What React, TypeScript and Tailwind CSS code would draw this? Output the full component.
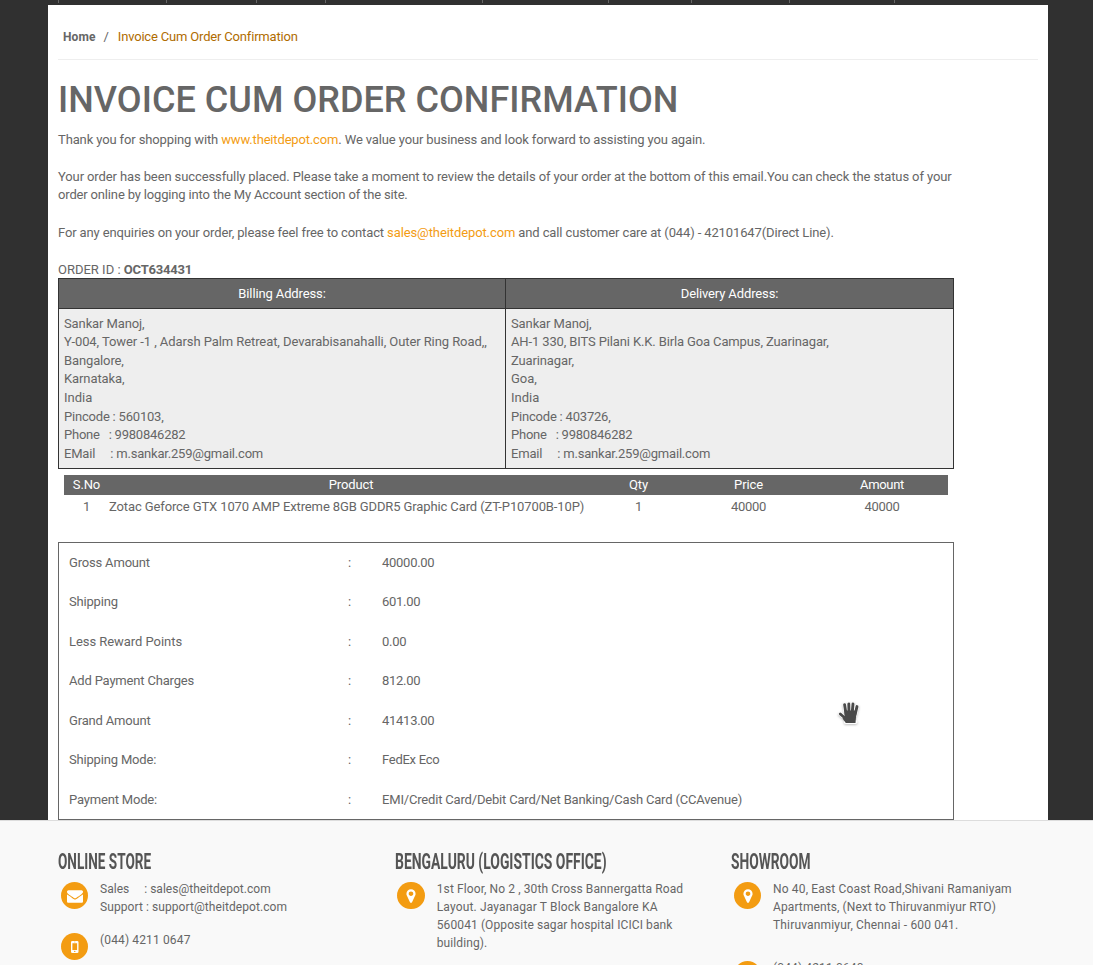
import type { ReactNode } from "react";

const ticks = [58, 166, 256, 325, 482, 608, 691, 789, 894];

const summary = [
  ["Gross Amount", "40000.00"],
  ["Shipping", "601.00"],
  ["Less Reward Points", "0.00"],
  ["Add Payment Charges", "812.00"],
  ["Grand Amount", "41413.00"],
  ["Shipping Mode:", "FedEx Eco"],
  ["Payment Mode:", "EMI/Credit Card/Debit Card/Net Banking/Cash Card (CCAvenue)"],
];

type Line = { text: string; tracking: string };

const billing: Line[] = [
  { text: "Sankar Manoj,", tracking: "tracking-[-0.11px]" },
  { text: "Y-004, Tower -1 , Adarsh Palm Retreat, Devarabisanahalli, Outer Ring Road,,", tracking: "tracking-[-0.08px]" },
  { text: "Bangalore,", tracking: "tracking-[-0.13px]" },
  { text: "Karnataka,", tracking: "tracking-[-0.1px]" },
  { text: "India", tracking: "tracking-normal" },
  { text: "Pincode : 560103,", tracking: "tracking-[-0.2px]" },
  { text: "Phone \u00a0 : 9980846282", tracking: "tracking-[-0.23px]" },
  { text: "EMail \u00a0\u00a0\u00a0 : m.sankar.259@gmail.com", tracking: "tracking-[-0.2px]" },
];

const delivery: Line[] = [
  { text: "Sankar Manoj,", tracking: "tracking-[-0.11px]" },
  { text: "AH-1 330, BITS Pilani K.K. Birla Goa Campus, Zuarinagar,", tracking: "tracking-[-0.13px]" },
  { text: "Zuarinagar,", tracking: "tracking-[-0.13px]" },
  { text: "Goa,", tracking: "tracking-normal" },
  { text: "India", tracking: "tracking-normal" },
  { text: "Pincode : 403726,", tracking: "tracking-[-0.2px]" },
  { text: "Phone \u00a0 : 9980846282", tracking: "tracking-[-0.23px]" },
  { text: "Email \u00a0\u00a0\u00a0 : m.sankar.259@gmail.com", tracking: "tracking-[-0.2px]" },
];

function Address({ title, lines, className }: { title: string; lines: Line[]; className: string }) {
  return (
    <div className={className}>
      <div className="h-[30px] border-b border-[#333] bg-[#666] text-center leading-[29px] text-white">{title}</div>
      <div className="h-[159px] bg-[#eee] px-[5px] pt-[5.750px]">
        {lines.map((l, i) => (
          <div key={i} className={"whitespace-nowrap " + l.tracking}>{l.text}</div>
        ))}
      </div>
    </div>
  );
}

function Circle({ children }: { children: ReactNode }) {
  return (
    <span className="ml-[2.75px] mt-[1.5px] flex size-[27.5px] shrink-0 items-center justify-center rounded-full bg-[#f39c12] text-white">
      {children}
    </span>
  );
}

function Envelope() {
  return (
    <svg className="mt-px" width="16" height="16" viewBox="0 0 1792 1792" fill="currentColor">
      <path d="M1792 710v794q0 66-47 113t-113 47h-1472q-66 0-113-47t-47-113v-794q44 49 101 87 362 246 497 345 57 42 92.500 65.500t94.500 48 110 24.500h2q51 0 110-24.500t94.500-48 92.500-65.500q170-123 498-345 57-39 100-87zm0-294q0 79-49 151t-122 123q-376 261-468 325-10 7-42.500 31t-54 38.500-52 32.500-57.500 27-50 9h-2q-23 0-50-9t-57.500-27-52-32.500-54-38.500-42.500-31q-91-64-262-182.500t-205-142.500q-62-42-117-115.500t-55-136.500q0-78 41.500-130t118.500-52h1472q65 0 112.500 47t47.500 113z" />
    </svg>
  );
}

function Marker() {
  return (
    <svg className="mt-px" width="16" height="16" viewBox="0 0 1792 1792" fill="currentColor">
      <path d="M1152 640q0-106-75-181t-181-75-181 75-75 181 75 181 181 75 181-75 75-181zm256 0q0 109-33 179l-364 774q-16 33-47.500 52t-67.500 19-67.500-19-46.500-52l-365-774q-33-70-33-179 0-212 150-362t362-150 362 150 150 362z" />
    </svg>
  );
}

function Mobile() {
  return (
    <svg className="mt-[2px]" width="8" height="12" viewBox="0 0 8 12">
      <path fill="currentColor" fillRule="evenodd" d="M1.300 0H6.200Q7.500 0 7.500 1.300V10.700Q7.500 12 6.200 12H1.300Q0 12 0 10.700V1.300Q0 0 1.300 0ZM1.400 2.200V9H6.100V2.200ZM3 0.800V1.300H4.500V0.800ZM3.750 9.700A.7.7 0 1 0 3.760 11.100A.7.7 0 1 0 3.750 9.700Z" />
    </svg>
  );
}

function FooterTitle({ children, className }: { children: string; className: string }) {
  return (
    <h4 className={"h-[22px] origin-left whitespace-nowrap text-[21.5px] font-bold leading-[23px] text-[#555] " + className}>
      {children}
    </h4>
  );
}

export default function App() {
  return (
    <div className="h-[965px] w-[1093px] overflow-hidden bg-[#303030] font-['Roboto',sans-serif] text-[13px] leading-[18.57px] text-[#666]">
      <div className="relative h-[5px]">
        {ticks.map((x) => (
          <span key={x} className="absolute top-0 h-[3px] w-px bg-[#666]" style={{ left: x }} />
        ))}
      </div>
      <main className="relative ml-12 h-[815px] w-[1000px] bg-white px-[10px] tracking-[-0.125px]">
        <nav className="flex h-[55px] w-[980px] items-center border-b border-[#eee] pl-[5px] pt-[10px]">
          <span className="text-[12px] font-bold tracking-[0.1px]">Home</span>
          <span className="ml-[8px]">/</span>
          <span className="ml-[9px] tracking-[-0.18px] text-[#b06c00]">Invoice Cum Order Confirmation</span>
        </nav>
        <h1 className="mt-[21px] h-[49.800px] whitespace-nowrap text-[36px] font-medium leading-[39.6px] tracking-[0.03px]">INVOICE CUM ORDER CONFIRMATION</h1>
        <div className="h-[147.200px] w-[896px]">
          <p>Thank you for shopping with <a className="tracking-[-0.16px] text-[#f39c12]">www.theitdepot.com</a>. We value your business and look forward to assisting you again.</p>
          <p className="mt-[18.57px]"><span className="tracking-[-0.11px]">Your order has been successfully placed. Please take a moment to review the details of your order at the bottom of this email.You can check the status of your</span><br /><span className="tracking-[-0.16px]">order online by logging into the My Account section of the site.</span></p>
          <p className="mt-[18.57px]">For any enquiries on your order, please feel free to contact <a className="tracking-[-0.1px] text-[#f39c12]">sales@theitdepot.com</a> and call customer care at (044) - 42101647(Direct Line).</p>
          <p className="mt-[18.57px]"><span className="tracking-normal">ORDER ID : </span><b className="tracking-[-0.2px]">OCT634431</b></p>
        </div>
        <div className="flex w-[896px] border border-[#333]">
          <Address title="Billing Address:" lines={billing} className="w-[447px] border-r border-[#333]" />
          <Address title="Delivery Address:" lines={delivery} className="w-[447px]" />
        </div>
        <div className="mx-[6px] mt-[6px] w-[884px]">
          <div className="grid h-5 grid-cols-[45px_487px_85px_135px_132px] bg-[#666] text-center leading-[20px] text-white">
            <span>S.No</span>
            <span className="pr-[3px]">Product</span>
            <span>Qty</span>
            <span>Price</span>
            <span className="tracking-[-0.3px]">Amount</span>
          </div>
          <div className="grid h-[47px] grid-cols-[45px_487px_85px_135px_132px] text-center leading-[24px]">
            <span>1</span>
            <span className="text-left tracking-[-0.115px]">Zotac Geforce GTX 1070 AMP Extreme 8GB GDDR5 Graphic Card (ZT-P10700B-10P)</span>
            <span>1</span>
            <span className="tracking-[-0.3px]">40000</span>
            <span className="tracking-[-0.3px]">40000</span>
          </div>
        </div>
        <div className="h-[278px] w-[896px] border border-[#666] pl-[10px] pt-[0.3px]">
          {summary.map(([label, value]) => (
            <div key={label} className="flex h-[39.5px] items-center">
              <span className={label.startsWith("Less") ? "w-[279px] tracking-[-0.05px]" : "w-[279px] tracking-[-0.18px]"}>{label}</span>
              <span className="w-[34px]">:</span>
              <span className={value.length > 20 ? "tracking-[-0.18px]" : "tracking-[-0.27px]"}>{value}</span>
            </div>
          ))}
        </div>
        <svg className="absolute left-[788px] top-[694px] drop-shadow-[0_1px_1px_rgba(0,0,0,0.25)]" width="26" height="28" viewBox="0 0 26 28" fill="none" strokeLinecap="round" strokeLinejoin="round">
          <g stroke="#fff" strokeWidth="4.200">
            <path d="M8.600 5.600L10 15M12.800 5L13 14M17 5L16.200 14M21 7.600L19 16M4.300 15L9.500 19.500M9.800 23H19.500" />
          </g>
          <path d="M8.600 5.600L10 15M12.800 5L13 14M17 5L16.200 14M21 7.600L19 16M4.300 15L9.500 19.500" stroke="#4a4a4a" strokeWidth="2.900" />
          <path d="M8.400 11.500H20.600L19.500 24H9.800L6.500 19.500L8.600 17Z" fill="#4a4a4a" />
        </svg>
      </main>
      <footer className="h-[145px] border-t border-[#ddd] bg-[#f9f9f9] pl-[58px] pt-[29px] text-[12px] leading-[18px] tracking-[0.08px]">
        <div className="flex">
          <section className="w-[336.500px]">
            <FooterTitle className="scale-x-[0.631] tracking-normal">ONLINE STORE</FooterTitle>
            <div className="mt-[8px] flex h-[51px]">
              <Circle><Envelope /></Circle>
              <div className="ml-[11.750px] whitespace-nowrap"><span className="tracking-[0.02px]">Sales &nbsp;&nbsp;&nbsp; : sales@theitdepot.com</span><br />Support : support@theitdepot.com</div>
            </div>
            <div className="flex">
              <Circle><Mobile /></Circle>
              <div className="ml-[11.750px] tracking-[0.14px]">(044) 4211 0647</div>
            </div>
          </section>
          <section className="w-[336.500px]">
            <FooterTitle className="scale-x-[0.647] tracking-normal">BENGALURU (LOGISTICS OFFICE)</FooterTitle>
            <div className="mt-[8px] flex">
              <Circle><Marker /></Circle>
              <div className="ml-[12px] whitespace-nowrap tracking-[0.1px]">1st Floor, No 2 , 30th Cross Bannergatta Road<br /><span className="tracking-[0.15px]">Layout. Jayanagar T Block Bangalore KA</span><br />560041 (Opposite sagar hospital ICICI bank<br />building).</div>
            </div>
          </section>
          <section className="w-[336px]">
            <FooterTitle className="scale-x-[0.641] tracking-normal">SHOWROOM</FooterTitle>
            <div className="mt-[8px] flex h-[79px]">
              <Circle><Marker /></Circle>
              <div className="ml-[11.750px] whitespace-nowrap tracking-[0.16px]">No 40, East Coast Road,Shivani Ramaniyam<br /><span className="tracking-[0.1px]">Apartments, (Next to Thiruvanmiyur RTO)</span><br />Thiruvanmiyur, Chennai - 600 041.</div>
            </div>
            <div className="flex">
              <Circle><Mobile /></Circle>
              <div className="ml-[11.750px] tracking-[0.14px]">(044) 4211 0640</div>
            </div>
          </section>
        </div>
      </footer>
    </div>
  );
}
